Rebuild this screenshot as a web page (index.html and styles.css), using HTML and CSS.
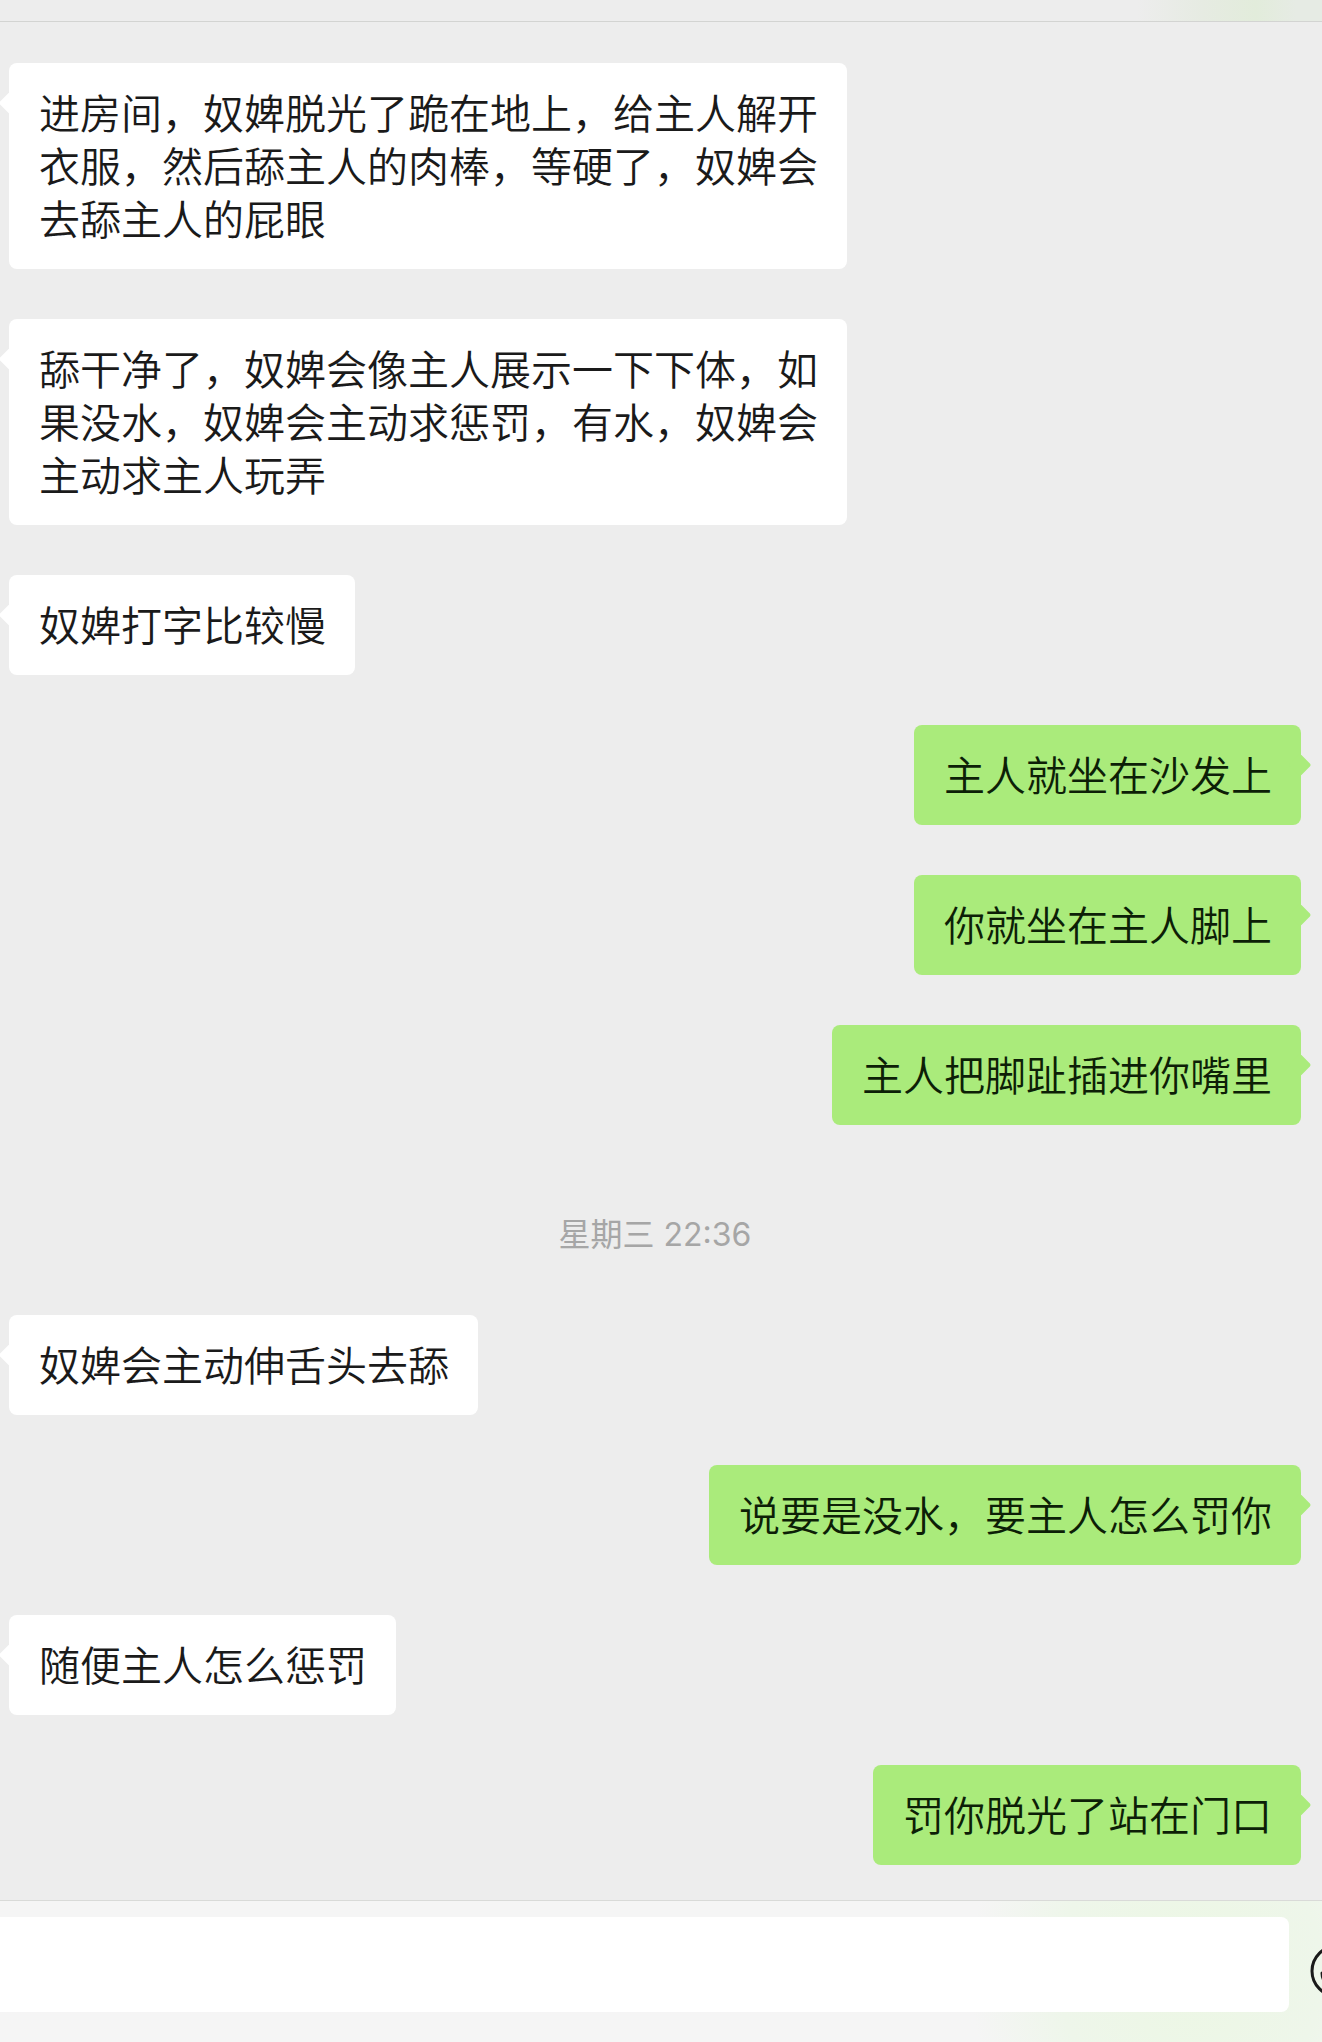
FILE: index.html
```html
<!DOCTYPE html>
<html lang="zh-CN">
<head>
    <meta charset="UTF-8">
    <meta name="viewport" content="width=device-width, initial-scale=1.0">
    <title>聊天</title>
    <link rel="stylesheet" href="styles.css">
</head>
<body>
    <header class="topbar"></header>

    <main class="chat">
        <div class="bubble">进房间，奴婢脱光了跪在地上，给主人解开衣服，然后舔主人的肉棒，等硬了，奴婢会去舔主人的屁眼</div>
        <div class="bubble">舔干净了，奴婢会像主人展示一下下体，如果没水，奴婢会主动求惩罚，有水，奴婢会主动求主人玩弄</div>
        <div class="bubble">奴婢打字比较慢</div>
        <div class="bubble mine">主人就坐在沙发上</div>
        <div class="bubble mine">你就坐在主人脚上</div>
        <div class="bubble mine">主人把脚趾插进你嘴里</div>
        <time class="time">星期三 22:36</time>
        <div class="bubble">奴婢会主动伸舌头去舔</div>
        <div class="bubble mine">说要是没水，要主人怎么罚你</div>
        <div class="bubble">随便主人怎么惩罚</div>
        <div class="bubble mine">罚你脱光了站在门口</div>
    </main>

    <footer class="inputbar">
        <input class="message" type="text" aria-label="输入消息">
        <button class="emoji" type="button" aria-label="表情">
            <svg width="54" height="54" viewBox="0 0 54 54" fill="none" stroke="#1a1a1a" stroke-width="3">
                <circle cx="27" cy="27" r="25"/>
                <path d="M12 29h30a15 15 0 0 1-30 0z" stroke-linejoin="round"/>
                <circle cx="19" cy="19" r="2" fill="#1a1a1a"/>
                <circle cx="35" cy="19" r="2" fill="#1a1a1a"/>
            </svg>
        </button>
    </footer>
</body>
</html>
```

FILE: styles.css
```css
* {
    box-sizing: border-box;
}
body {
    margin: 0;
    min-height: 100vh;
    display: flex;
    flex-direction: column;
    overflow-x: hidden;
    background-color: #ededed;
    color: #1a1a1a;
    font-family: "Noto Sans CJK SC", sans-serif;
}
.topbar {
    height: 22px;
    border-bottom: 1px solid #d3d4d2;
    background: linear-gradient(to right, transparent 86%, #e6ebe2 91%, #e2ecdb 95%, #e6ebe4 98%);
}
.chat {
    flex: 1;
    display: flex;
    flex-direction: column;
    align-items: flex-start;
    gap: 50px;
    padding: 41px 21px 35px 9px;
}
.bubble {
    position: relative;
    box-sizing: content-box;
    max-width: 19em;
    padding: 22px 29px 25px 30px;
    border-radius: 8px;
    background-color: #fff;
    font-size: 41px;
    font-weight: 350;
    line-height: 53px;
}
/* little arrow on the side of the bubble */
.bubble::before {
    content: "";
    position: absolute;
    top: 32px;
    left: -7px;
    width: 16px;
    height: 16px;
    border-radius: 2px;
    background-color: inherit;
    transform: rotate(45deg);
}
.mine {
    align-self: flex-end;
    background-color: #aaeb7b;
    color: #0d1f07;
}
.mine::before {
    left: auto;
    right: -7px;
}
.time {
    align-self: center;
    padding-top: 30px;
    color: #a6a6a6;
    font-family: Inter, "Noto Sans CJK SC", sans-serif;
    font-size: 32px;
    line-height: 60px;
}
.inputbar {
    display: flex;
    align-items: center;
    gap: 21px;
    padding: 16px 0 30px;
    border-top: 1px solid #d9dad8;
    background: radial-gradient(ellipse 220px 240px at 90% 50%, #ecf7e4 0%, #eef6ea 60%, #f5f5f5 100%);
}
.message {
    flex: 1;
    min-width: 0;
    height: 95px;
    padding: 0 30px;
    border: none;
    border-radius: 0 8px 8px 0;
    background-color: #fff;
    font: inherit;
    font-size: 41px;
}
/* sticks out past the right edge of the screen */
.emoji {
    flex: none;
    margin-top: 12px;
    margin-right: -42px;
    padding: 0;
    border: none;
    background: none;
    cursor: pointer;
}
.emoji svg {
    display: block;
}
```
